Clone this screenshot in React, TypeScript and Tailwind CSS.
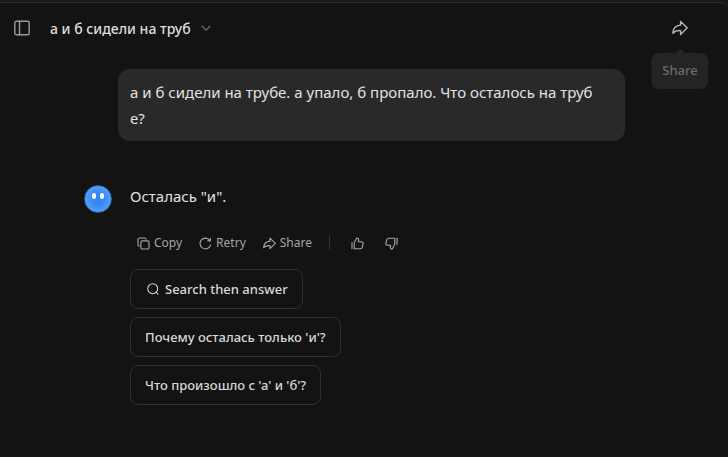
import type { ReactNode, SVGProps } from "react";

type IconProps = SVGProps<SVGSVGElement>;

function Icon({ children, ...props }: IconProps) {
    return (
        <svg
            viewBox="0 0 16 16"
            fill="none"
            stroke="currentColor"
            strokeWidth="1.4"
            strokeLinecap="round"
            strokeLinejoin="round"
            aria-hidden="true"
            {...props}
        >
            {children}
        </svg>
    );
}

function SidebarIcon(props: IconProps) {
    return (
        <Icon {...props}>
            <rect x="0.8" y="1.2" width="14.4" height="13.6" rx="1.6" />
            <path d="M5.5 1.2v13.6" />
        </Icon>
    );
}

function ChevronIcon(props: IconProps) {
    return (
        <Icon {...props}>
            <path d="M3.5 6l4.5 4.5L12.5 6" />
        </Icon>
    );
}

function ShareIcon(props: IconProps) {
    return (
        <Icon {...props}>
            <path d="M8.6 1.4L15.2 7.8L8.6 14.4V10.6C5.2 10.4 2.8 11.2 0.9 13.2C1 8.6 3.6 5.6 8.6 5.1Z" />
        </Icon>
    );
}

function CopyIcon(props: IconProps) {
    return (
        <Icon {...props}>
            <rect x="4.8" y="4.8" width="10" height="10" rx="2" />
            <path d="M2.6 11.2C1.8 11 1.2 10.3 1.2 9.4V3.2c0-1.1.9-2 2-2h6.2c.9 0 1.6.6 1.8 1.4" />
        </Icon>
    );
}

function RetryIcon(props: IconProps) {
    return (
        <Icon {...props}>
            <path d="M14.2 10A6.6 6.6 0 1 1 13.2 4" />
            <path d="M14 1.6v3.2h-3.2" />
        </Icon>
    );
}

function ThumbUpIcon(props: IconProps) {
    return (
        <Icon {...props}>
            <path d="M1.2 7v7.4" />
            <path d="M4 7.2L7 1.3C8.5 1.2 9.6 2.2 9.4 3.6L9.1 5.8H13C14.4 5.8 15.2 6.9 14.9 8.2L13.8 12.8C13.5 13.8 12.8 14.5 11.7 14.5H4Z" />
        </Icon>
    );
}

function SearchIcon(props: IconProps) {
    return (
        <Icon {...props}>
            <circle cx="7.6" cy="7.6" r="6.6" />
            <path d="M12.2 12.2l2.6 2.8" />
        </Icon>
    );
}

function Avatar() {
    return (
        <div className="flex size-7 shrink-0 items-center justify-center rounded-full border border-[#285d9c] bg-radial from-[#3586f3] from-30% to-[#69b4fb]">
            <div className="mb-1.5 flex gap-1">
                <span className="h-[6px] w-1 rounded-full bg-white" />
                <span className="h-[6px] w-1 rounded-full bg-white" />
            </div>
        </div>
    );
}

function ActionButton({ icon, label }: { icon: ReactNode; label: string }) {
    return (
        <button type="button" className="flex items-center gap-1">
            {icon}
            {label}
        </button>
    );
}

function Suggestion({ children }: { children: ReactNode }) {
    return (
        <button
            type="button"
            className="flex h-10 items-center gap-1 rounded-lg border border-[#303030] px-[14px] text-[13px] font-medium text-[#d8d8d8]"
        >
            {children}
        </button>
    );
}

export default function App() {
    return (
        <div className="min-h-screen bg-[#181818] pt-[2px] font-['Noto_Sans','Open_Sans',sans-serif]">
            <div className="min-h-[calc(100vh-2px)] rounded-tr-lg border-t border-[#2c2c2c] bg-[#131313]">
                <header className="flex h-[50px] items-center justify-between pr-10 pl-[14px]">
                    <div className="flex items-center">
                        <button type="button" aria-label="Toggle sidebar" className="text-[#9a9a9a]">
                            <SidebarIcon className="size-4" />
                        </button>
                        <button
                            type="button"
                            className="ml-5 flex items-center gap-2 text-[14px] font-medium text-[#dedede]"
                        >
                            а и б сидели на труб
                            <ChevronIcon className="size-3.5 text-[#707070]" />
                        </button>
                    </div>
                    <div className="relative flex">
                        <button type="button" aria-label="Share" className="text-[#b4b4b4]">
                            <ShareIcon className="size-4" />
                        </button>
                        {/* Tooltip */}
                        <div
                            role="tooltip"
                            className="absolute top-[33px] left-1/2 flex h-9 -translate-x-1/2 items-center rounded-lg bg-[#242424] px-[11px] text-[13px] font-medium text-[#6b6b6b]"
                        >
                            <span className="absolute -top-[3px] left-1/2 size-2 -translate-x-1/2 rotate-45 rounded-xs bg-[#242424]" />
                            <span className="relative">Share</span>
                        </div>
                    </div>
                </header>

                <main className="mx-auto max-w-[560px] pt-4 text-[15px] leading-[26px] text-[#e2e2e2]">
                    {/* User message */}
                    <div className="mr-[19px] ml-[34px] rounded-xl bg-[#292929] py-[10px] pr-5 pl-3 break-all">
                        а и б сидели на трубе. а упало, б пропало. Что осталось на трубе?
                    </div>

                    {/* Answer */}
                    <div className="mt-11 flex gap-[18px]">
                        <Avatar />
                        <div className="-mt-[2px]">
                            <p>Осталась "и".</p>
                            <div className="mt-5 flex h-7 items-center gap-[17px] pl-[7px] text-[12px] text-[#a6a6a6]">
                                <ActionButton icon={<CopyIcon className="size-[13px]" />} label="Copy" />
                                <ActionButton icon={<RetryIcon className="size-[13px]" />} label="Retry" />
                                <ActionButton icon={<ShareIcon className="size-[13px]" />} label="Share" />
                                <span className="h-3.5 w-px bg-[#333333]" />
                                <button type="button" aria-label="Like" className="ml-1">
                                    <ThumbUpIcon className="size-[13px]" />
                                </button>
                                <button type="button" aria-label="Dislike" className="ml-1">
                                    <ThumbUpIcon className="size-[13px] rotate-180" />
                                </button>
                            </div>
                            <div className="mt-3 flex flex-col items-start gap-2">
                                <Suggestion>
                                    <SearchIcon className="mx-0.5 size-3" />
                                    Search then answer
                                </Suggestion>
                                <Suggestion>Почему осталась только 'и'?</Suggestion>
                                <Suggestion>Что произошло с 'а' и 'б'?</Suggestion>
                            </div>
                        </div>
                    </div>
                </main>
            </div>
        </div>
    );
}
